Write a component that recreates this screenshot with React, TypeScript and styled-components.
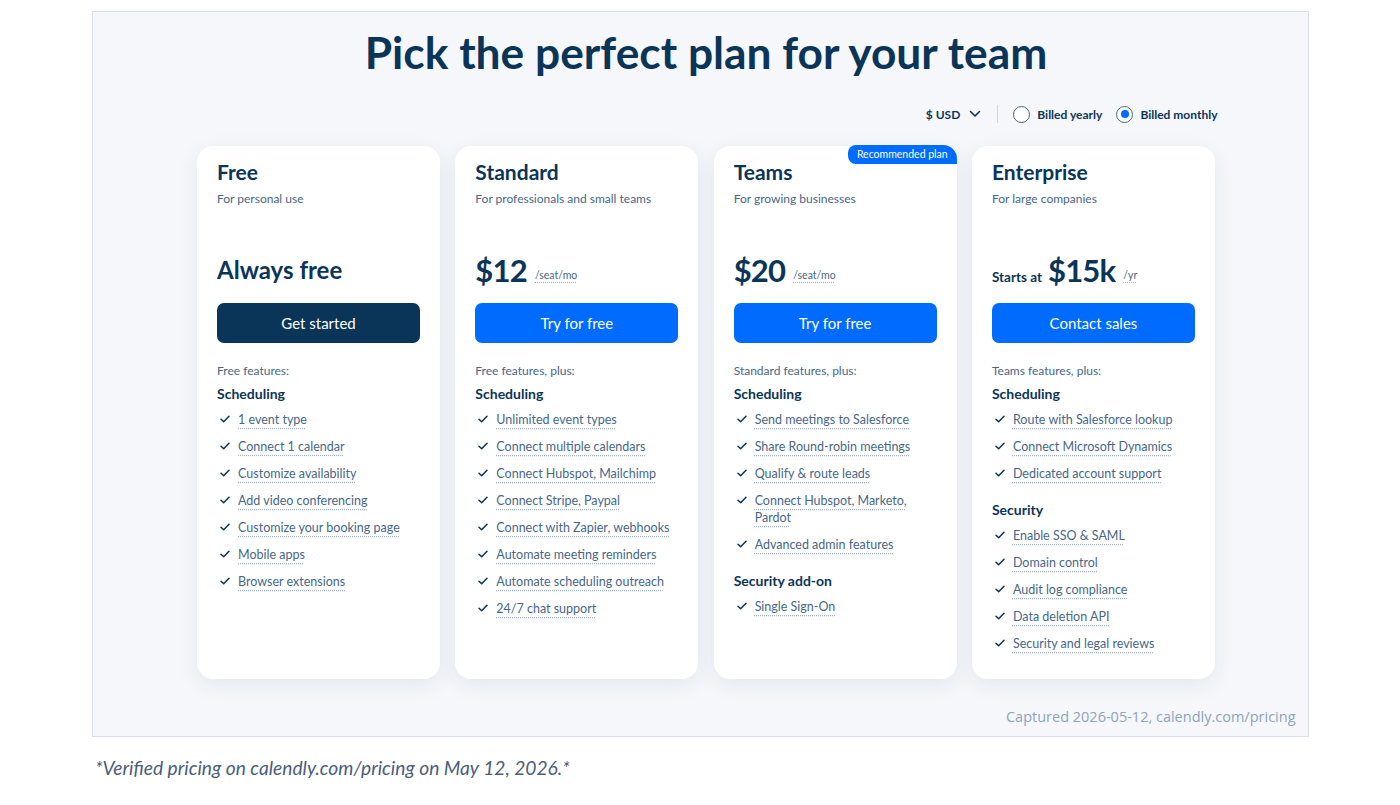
import React from 'react';
import styled, { createGlobalStyle } from 'styled-components';

interface Section {
  heading: string;
  items: string[];
}

interface Plan {
  name: string;
  tagline: string;
  price: React.ReactNode;
  cta: string;
  dark?: boolean;
  recommended?: boolean;
  intro: string;
  sections: Section[];
}

const GlobalStyle = createGlobalStyle`
  body {
    margin: 0;
    background: #ffffff;
    font-family: Lato, "Noto Sans", sans-serif;
  }
`;

const Page = styled.div`
  width: 1400px;
  padding-top: 11px;
  display: flex;
  flex-direction: column;
  align-items: center;
`;

const Frame = styled.section`
  box-sizing: border-box;
  width: 1217px;
  height: 726px;
  border: 1px solid #d7e0ec;
  background: #f5f7fa;
  padding: 13px 12px 0 24px;
  display: flex;
  flex-direction: column;
  align-items: center;
`;

const Title = styled.h1`
  margin: 0;
  font-size: 44.3px;
  line-height: 54px;
  font-weight: 700;
  color: #0b3558;
  letter-spacing: 0;
`;

const Toolbar = styled.div`
  align-self: stretch;
  display: flex;
  justify-content: flex-end;
  align-items: center;
  gap: 8px;
  height: 24px;
  margin-top: 23px;
  padding-right: 72px;
  font-size: 12px;
  font-weight: 700;
  color: #0b3558;
`;

const Currency = styled.div`
  display: flex;
  align-items: center;
  gap: 9px;
`;

const Divider = styled.span`
  width: 1px;
  height: 18px;
  background: #c9d4e2;
  margin: 0 7px 0 8px;
`;

const RadioLabel = styled.label`
  display: flex;
  align-items: center;
  gap: 7px;
  margin-right: 6px;
`;

const Radio = styled.span<{ $checked?: boolean }>`
  box-sizing: border-box;
  width: 17px;
  height: 17px;
  border-radius: 50%;
  border: 1.5px solid #476788;
  background: #fff;
  display: flex;
  align-items: center;
  justify-content: center;
  &::after {
    content: '';
    display: ${(p) => (p.$checked ? 'block' : 'none')};
    width: 8px;
    height: 8px;
    border-radius: 50%;
    background: #006bff;
  }
`;

const Cards = styled.div`
  display: grid;
  grid-template-columns: repeat(4, 243px);
  gap: 15.3px;
  margin-top: 20px;
`;

const Card = styled.article`
  position: relative;
  box-sizing: border-box;
  height: 533px;
  background: #ffffff;
  border-radius: 16px;
  box-shadow: 0 6px 22px rgba(25, 50, 90, 0.08);
  padding: 14px 20px 0 20px;
  display: flex;
  flex-direction: column;
`;

const Badge = styled.span`
  position: absolute;
  top: -1px;
  right: 0;
  padding: 0 9px;
  height: 19px;
  line-height: 19px;
  background: #006bff;
  color: #fff;
  font-size: 10.5px;
  font-weight: 400;
  border-radius: 8px 14px 0 8px;
`;

const PlanName = styled.h2`
  margin: 0;
  font-size: 21px;
  line-height: 24px;
  font-weight: 700;
  color: #0b3558;
`;

const Tagline = styled.p`
  margin: 7px 0 0;
  font-size: 12px;
  line-height: 16px;
  color: #476788;
`;

const PriceRow = styled.div`
  height: 40px;
  margin-top: 43px;
  display: flex;
  align-items: baseline;
  gap: 4px;
  color: #0b3558;
  font-weight: 700;
`;

const BigPrice = styled.span`
  font-size: 31px;
  line-height: 40px;
  font-weight: 700;
  letter-spacing: -0.8px;
`;

const Always = styled.span`
  font-size: 24px;
  line-height: 40px;
`;

const Starts = styled.span`
  font-size: 13.5px;
  margin-right: 2px;
`;

const Unit = styled.span`
  font-size: 10.5px;
  font-weight: 400;
  color: #476788;
  margin-left: 4px;
  transform: translateY(-3px);
  text-decoration: underline dotted #9fb4cc;
  text-underline-offset: 3px;
`;

const Button = styled.button<{ $dark?: boolean }>`
  margin-top: 13px;
  height: 40px;
  border: none;
  border-radius: 7px;
  background: ${(p) => (p.$dark ? '#0b3558' : '#006bff')};
  color: #ffffff;
  font-family: inherit;
  font-size: 15px;
  font-weight: 400;
`;

const Intro = styled.p`
  margin: 20px 0 0;
  font-size: 12px;
  line-height: 16px;
  color: #476788;
`;

const SectionHeading = styled.h3<{ $first?: boolean }>`
  margin: ${(p) => (p.$first ? '6px' : '19px')} 0 0;
  font-size: 14px;
  line-height: 18px;
  font-weight: 700;
  color: #0b3558;
`;

const List = styled.ul`
  list-style: none;
  margin: 8px 0 0;
  padding: 0;
  display: flex;
  flex-direction: column;
  gap: 10px;
`;

const Item = styled.li`
  display: flex;
  align-items: flex-start;
  gap: 8px;
  padding-left: 3px;
  font-size: 12.5px;
  line-height: 17px;
  color: #476788;
`;

const CheckIcon = styled.svg`
  flex: none;
  margin-top: 4px;
`;

const ItemText = styled.span`
  max-width: 180px;
  text-decoration: underline dotted #9fb4cc;
  text-underline-offset: 4px;
`;

const Caption = styled.div`
  align-self: flex-end;
  margin-top: auto;
  margin-bottom: 9px;
  font-family: "Open Sans", sans-serif;
  font-size: 14.5px;
  line-height: 20px;
  color: #8ea3bd;
`;

const Footnote = styled.p`
  align-self: flex-start;
  margin: 19px 0 0 95px;
  font-family: Lato, sans-serif;
  font-style: italic;
  font-size: 19.2px;
  color: #4a5e7a;
`;

const Check = () => (
  <CheckIcon width="10" height="8" viewBox="0 0 10 8" fill="none">
    <path d="M1 4.2 L3.7 6.8 L9 1.2" stroke="#0b3558" strokeWidth="1.5" strokeLinecap="round" strokeLinejoin="round" />
  </CheckIcon>
);

const Chevron = () => (
  <svg width="12" height="8" viewBox="0 0 12 8" fill="none">
    <path d="M1.5 1.5 L6 6 L10.5 1.5" stroke="#0b3558" strokeWidth="1.6" strokeLinecap="round" strokeLinejoin="round" />
  </svg>
);

const plans: Plan[] = [
  {
    name: 'Free',
    tagline: 'For personal use',
    price: <Always>Always free</Always>,
    cta: 'Get started',
    dark: true,
    intro: 'Free features:',
    sections: [
      {
        heading: 'Scheduling',
        items: [
          '1 event type',
          'Connect 1 calendar',
          'Customize availability',
          'Add video conferencing',
          'Customize your booking page',
          'Mobile apps',
          'Browser extensions',
        ],
      },
    ],
  },
  {
    name: 'Standard',
    tagline: 'For professionals and small teams',
    price: (
      <>
        <BigPrice>$12</BigPrice>
        <Unit>/seat/mo</Unit>
      </>
    ),
    cta: 'Try for free',
    intro: 'Free features, plus:',
    sections: [
      {
        heading: 'Scheduling',
        items: [
          'Unlimited event types',
          'Connect multiple calendars',
          'Connect Hubspot, Mailchimp',
          'Connect Stripe, Paypal',
          'Connect with Zapier, webhooks',
          'Automate meeting reminders',
          'Automate scheduling outreach',
          '24/7 chat support',
        ],
      },
    ],
  },
  {
    name: 'Teams',
    tagline: 'For growing businesses',
    price: (
      <>
        <BigPrice>$20</BigPrice>
        <Unit>/seat/mo</Unit>
      </>
    ),
    cta: 'Try for free',
    recommended: true,
    intro: 'Standard features, plus:',
    sections: [
      {
        heading: 'Scheduling',
        items: [
          'Send meetings to Salesforce',
          'Share Round-robin meetings',
          'Qualify & route leads',
          'Connect Hubspot, Marketo, Pardot',
          'Advanced admin features',
        ],
      },
      { heading: 'Security add-on', items: ['Single Sign-On'] },
    ],
  },
  {
    name: 'Enterprise',
    tagline: 'For large companies',
    price: (
      <>
        <Starts>Starts at</Starts>
        <BigPrice>$15k</BigPrice>
        <Unit>/yr</Unit>
      </>
    ),
    cta: 'Contact sales',
    intro: 'Teams features, plus:',
    sections: [
      {
        heading: 'Scheduling',
        items: ['Route with Salesforce lookup', 'Connect Microsoft Dynamics', 'Dedicated account support'],
      },
      {
        heading: 'Security',
        items: ['Enable SSO & SAML', 'Domain control', 'Audit log compliance', 'Data deletion API', 'Security and legal reviews'],
      },
    ],
  },
];

const App: React.FC = () => (
  <>
    <GlobalStyle />
    <Page>
      <Frame>
        <Title>Pick the perfect plan for your team</Title>
        <Toolbar>
          <Currency>
            $ USD <Chevron />
          </Currency>
          <Divider />
          <RadioLabel>
            <Radio /> Billed yearly
          </RadioLabel>
          <RadioLabel>
            <Radio $checked /> Billed monthly
          </RadioLabel>
        </Toolbar>
        <Cards>
          {plans.map((plan) => (
            <Card key={plan.name}>
              {plan.recommended && <Badge>Recommended plan</Badge>}
              <PlanName>{plan.name}</PlanName>
              <Tagline>{plan.tagline}</Tagline>
              <PriceRow>{plan.price}</PriceRow>
              <Button $dark={plan.dark}>{plan.cta}</Button>
              <Intro>{plan.intro}</Intro>
              {plan.sections.map((section, i) => (
                <React.Fragment key={section.heading}>
                  <SectionHeading $first={i === 0}>{section.heading}</SectionHeading>
                  <List>
                    {section.items.map((item) => (
                      <Item key={item}>
                        <Check />
                        <ItemText>{item}</ItemText>
                      </Item>
                    ))}
                  </List>
                </React.Fragment>
              ))}
            </Card>
          ))}
        </Cards>
        <Caption>Captured 2026-05-12, calendly.com/pricing</Caption>
      </Frame>
      <Footnote>*Verified pricing on calendly.com/pricing on May 12, 2026.*</Footnote>
    </Page>
  </>
);

export default App;
